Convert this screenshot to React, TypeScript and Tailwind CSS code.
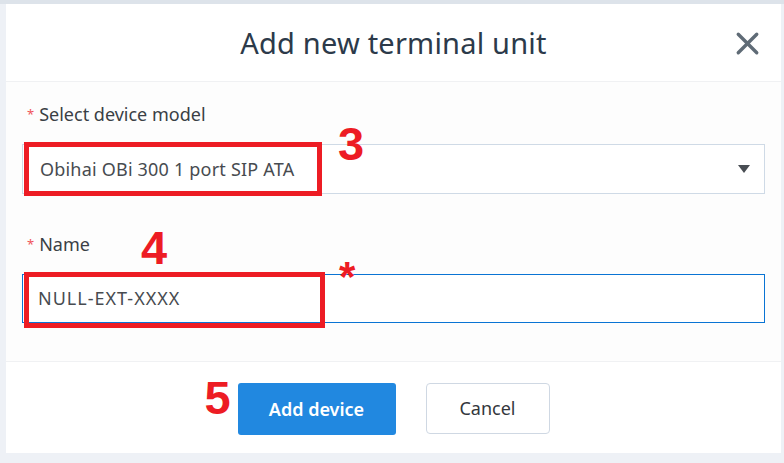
import { X } from "lucide-react";

const RED = "#ed1c24";

function Label({ text }: { text: string }) {
    return (
        <div className="flex items-center gap-[5px] pl-[5px] text-[18px] leading-[24px] text-[#3a3f45]">
            <span className="text-[13px] text-[#f0545a]">*</span>
            <span>{text}</span>
        </div>
    );
}

export default function App() {
    return (
        <div
            className="relative h-[463px] w-[784px] overflow-hidden bg-[#eef1f6]"
            style={{ fontFamily: "'Noto Sans', sans-serif" }}
        >
            <div className="h-[4px] w-full bg-[#dde3ea]" />
            <div className="ml-[6px] flex h-[449px] w-[775px] flex-col bg-white">
                {/* header */}
                <div className="relative flex h-[78px] shrink-0 items-center justify-center border-b border-[#f0f1f3]">
                    <h2 className="text-[29px] font-normal tracking-[0.2px] text-[#2c3a4a]">Add new terminal unit</h2>
                    <button className="absolute right-[15px] top-[21px] text-[#5f6b76]" aria-label="Close">
                        <X size={37} strokeWidth={2.2} />
                    </button>
                </div>

                {/* body */}
                <div className="flex flex-1 flex-col bg-[#fdfdfd] px-[16px] pt-[20px]">
                    <Label text="Select device model" />
                    <div className="relative mt-[18px] flex h-[50px] items-center justify-between border border-[#cfdae6] bg-white pl-[17px] pr-[14px]">
                        <span className="text-[18px] tracking-[0.2px] text-[#474b50]">
                            Obihai OBi 300 1 port SIP ATA
                        </span>
                        <svg width="12" height="8" viewBox="0 0 12 8">
                            <path d="M0 0 H12 L6 8 Z" fill="#484d53" />
                        </svg>
                        <div className="pointer-events-none absolute left-[1px] top-[-3px] h-[54px] w-[298px] border-[5px] border-[#ed1c24]" />
                        <span
                            className="absolute left-[315px] top-[-25px] text-[47px] font-bold leading-none"
                            style={{ color: RED, fontFamily: "'Liberation Sans', Arial, sans-serif" }}
                        >
                            3
                        </span>
                    </div>

                    <div className="relative mt-[38px]">
                        <Label text="Name" />
                        <span
                            className="absolute left-[119px] top-[-8px] text-[47px] font-bold leading-none"
                            style={{ color: RED, fontFamily: "'Liberation Sans', Arial, sans-serif" }}
                        >
                            4
                        </span>
                    </div>
                    <div className="relative mt-[18px] flex h-[49px] items-center border border-[#0a74d4] bg-white pl-[15px]">
                        <span className="text-[18px] tracking-[1px] text-[#474b50]">
                            NULL-EXT-XXXX
                        </span>
                        <div className="pointer-events-none absolute left-[1px] top-[-3px] h-[56px] w-[301px] border-[5px] border-[#ed1c24]" />
                        <span
                            className="absolute left-[316px] top-[-19px] text-[42px] font-bold leading-none"
                            style={{ color: RED, fontFamily: "'Liberation Sans', Arial, sans-serif" }}
                        >
                            *
                        </span>
                    </div>
                </div>

                {/* footer */}
                <div className="flex h-[92px] shrink-0 items-start justify-center gap-[30px] border-t border-[#f0f1f3] pt-[21px]">
                    <div className="relative">
                        <span
                            className="absolute left-[-33px] top-[-9px] text-[47px] font-bold leading-none"
                            style={{ color: RED, fontFamily: "'Liberation Sans', Arial, sans-serif" }}
                        >
                            5
                        </span>
                        <button className="h-[52px] w-[158px] rounded-[3px] bg-[#2188e0] text-[18px] font-semibold text-white">
                            Add device
                        </button>
                    </div>
                    <button className="h-[51px] w-[124px] rounded-[4px] border border-[#cfd8e3] bg-white text-[18px] text-[#33373c]">
                        Cancel
                    </button>
                </div>
            </div>
        </div>
    );
}
